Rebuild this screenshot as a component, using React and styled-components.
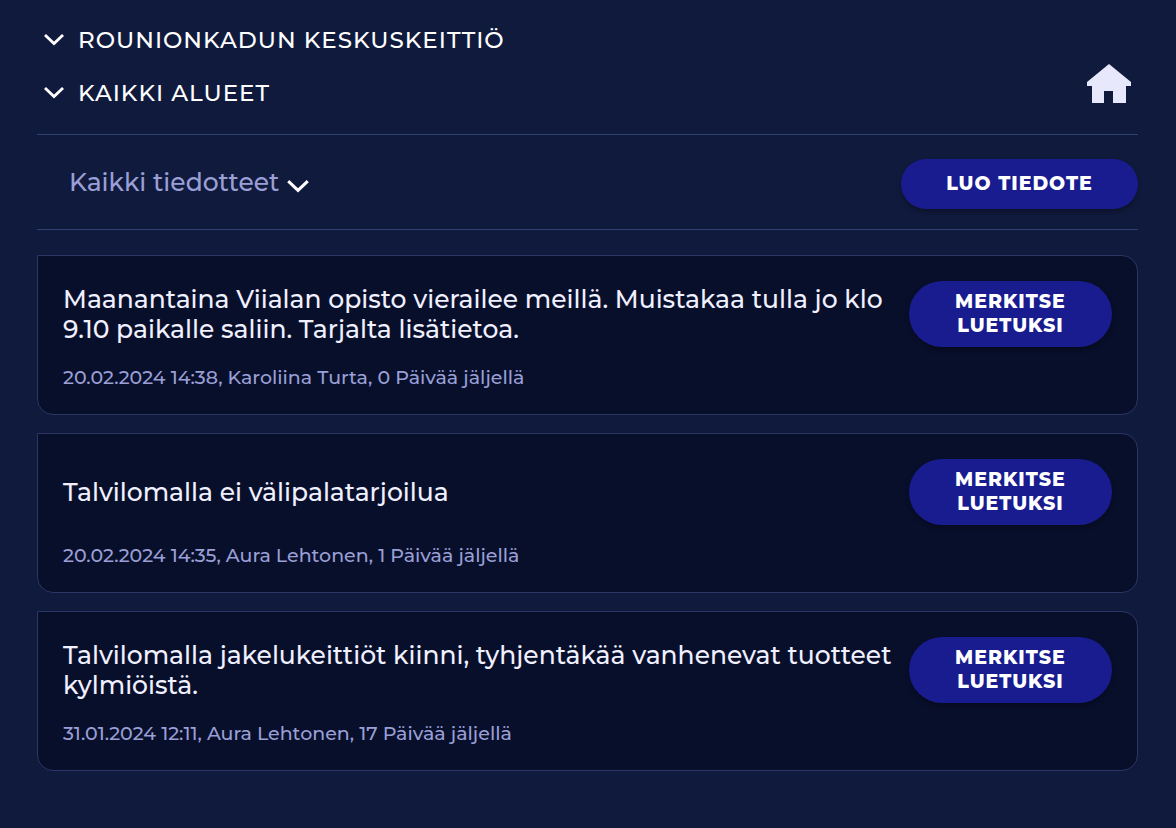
import { useState } from "react";
import styled, { createGlobalStyle } from "styled-components";

const GlobalStyle = createGlobalStyle`
  * {
    box-sizing: border-box;
  }
  body {
    margin: 0;
    background-color: #101a3d;
    color: #f0f0ff;
    font-family: Montserrat, Inter, "Liberation Sans", sans-serif;
  }
  button,
  select {
    font-family: inherit;
    cursor: pointer;
  }
`;

const Page = styled.main`
  padding: 14px 38px 56px 37px;
`;

const Header = styled.header`
  display: flex;
  justify-content: space-between;
  align-items: flex-end;
  padding-bottom: 15px;
  border-bottom: 1px solid #303f74;
`;

const Menus = styled.nav`
  display: flex;
  flex-direction: column;
  align-items: flex-start;
  gap: 1px;
`;

const MenuButton = styled.button`
  display: flex;
  align-items: center;
  gap: 14px;
  height: 52px;
  padding: 0 7px;
  border: none;
  background: none;
  color: #fff;
  font-size: 23px;
  font-weight: 500;
  letter-spacing: 1px;
  text-transform: uppercase;
`;

const HomeLink = styled.a`
  display: flex;
  padding: 0 7px 16px;
`;

const Toolbar = styled.div`
  display: flex;
  justify-content: space-between;
  align-items: center;
  padding: 24px 0 20px 32px;
  border-bottom: 1px solid #303f74;
`;

const Filter = styled.div`
  display: flex;
  align-items: flex-end;
  gap: 8px;
  padding-bottom: 4px;

  svg {
    margin-bottom: 5px;
  }
`;

const FilterSelect = styled.select`
  appearance: none;
  field-sizing: content;
  padding: 0;
  border: none;
  background: none;
  color: #9a9fd6;
  font-size: 25px;
  font-weight: 500;
  line-height: 32px;
`;

const PillButton = styled.button`
  flex-shrink: 0;
  width: ${(props) => (props.$wide ? "237px" : "203px")};
  padding: ${(props) => (props.$wide ? "13px 24px" : "9px 24px")};
  border: none;
  border-radius: 33px;
  background-color: #191c8f;
  box-shadow: 0 3px 5px rgba(0, 0, 0, 0.3);
  color: #fff;
  font-size: 19px;
  font-weight: 800;
  line-height: 24px;
  letter-spacing: 1px;
  text-transform: uppercase;
`;

const Notices = styled.section`
  display: flex;
  flex-direction: column;
  gap: 18px;
  padding-top: 25px;
`;

const Card = styled.article`
  padding: 25px 25px 24px;
  border: 1px solid #2b3566;
  border-radius: 0 16px 16px 16px;
  background-color: #080f2b;
`;

const CardRow = styled.div`
  display: flex;
  justify-content: space-between;
  align-items: center;
  gap: 14px;
`;

const Title = styled.h2`
  margin: 0;
  font-size: 25px;
  font-weight: 500;
  line-height: 30px;
`;

const Meta = styled.p`
  margin: 19px 0 0;
  color: #9a9fd6;
  font-size: 19px;
  font-weight: 500;
  line-height: 24px;
`;

const notices = [
  {
    id: 1,
    title:
      "Maanantaina Viialan opisto vierailee meillä. Muistakaa tulla jo klo 9.10 paikalle saliin. Tarjalta lisätietoa.",
    date: "20.02.2024 14:38",
    author: "Karoliina Turta",
    days: 0,
  },
  {
    id: 2,
    title: "Talvilomalla ei välipalatarjoilua",
    date: "20.02.2024 14:35",
    author: "Aura Lehtonen",
    days: 1,
  },
  {
    id: 3,
    title:
      "Talvilomalla jakelukeittiöt kiinni, tyhjentäkää vanhenevat tuotteet kylmiöistä.",
    date: "31.01.2024 12:11",
    author: "Aura Lehtonen",
    days: 17,
  },
];

const Chevron = ({ width = 20, height = 12 }) => (
  <svg
    width={width}
    height={height}
    viewBox="0 0 20 12"
    fill="none"
    stroke="#fff"
    strokeWidth="2.8"
    aria-hidden="true"
  >
    <path d="M1 1 L10 9.6 L19 1" />
  </svg>
);

const HomeIcon = () => (
  <svg width="44" height="39" viewBox="0 0 44 39" fill="#e8e8fc" aria-hidden="true">
    <path d="M22 0 L44 18 V22 H39 V39 H26 V27 H17 V39 H5 V22 H0 V18 Z" />
  </svg>
);

const App = () => {
  const [filter, setFilter] = useState("all");

  return (
    <>
      <GlobalStyle />
      <Page>
        <Header>
          <Menus>
            <MenuButton type="button" aria-haspopup="true">
              <Chevron />
              Rounionkadun keskuskeittiö
            </MenuButton>
            <MenuButton type="button" aria-haspopup="true">
              <Chevron />
              Kaikki alueet
            </MenuButton>
          </Menus>
          <HomeLink href="#" aria-label="Etusivu">
            <HomeIcon />
          </HomeLink>
        </Header>

        <Toolbar>
          <Filter>
            <FilterSelect
              aria-label="Tiedotteet"
              value={filter}
              onChange={(e) => setFilter(e.target.value)}
            >
              <option value="all">Kaikki tiedotteet</option>
            </FilterSelect>
            <Chevron width={22} height={13} />
          </Filter>
          <PillButton type="button" $wide>
            Luo tiedote
          </PillButton>
        </Toolbar>

        <Notices>
          {notices.map((i) => {
            return (
              <Card key={i.id}>
                <CardRow>
                  <Title>{i.title}</Title>
                  <PillButton type="button">Merkitse luetuksi</PillButton>
                </CardRow>
                <Meta>
                  {i.date}, {i.author}, {i.days} Päivää jäljellä
                </Meta>
              </Card>
            );
          })}
        </Notices>
      </Page>
    </>
  );
};

export default App;
